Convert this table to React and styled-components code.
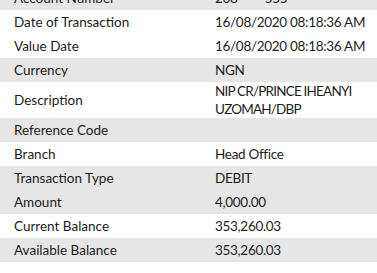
import React from "react";
import styled, { createGlobalStyle } from "styled-components";

const Global = createGlobalStyle`
  html, body { margin: 0; padding: 0; background: #ffffff; }
  body { font-family: Lato, "Open Sans", "Liberation Sans", sans-serif; }
`;

const Table = styled.div`
  display: flex;
  flex-direction: column;
  margin-top: -14px;
  width: 377px;
  overflow: hidden;
`;

const Row = styled.div`
  display: grid;
  grid-template-columns: 215px 1fr;
  align-items: center;
  min-height: 24px;
  background: ${(p) => (p.$shade ? "#e6e6e6" : "#ffffff")};
  color: #1c1c1c;
  font-size: 13.5px;
  line-height: 18px;
`;

const Label = styled.div`
  padding-left: 14px;
`;

const Value = styled.div`
  white-space: nowrap;
  letter-spacing: ${(p) => (p.$condensed ? "-0.8px" : "-0.3px")};
`;

const rows = [
  ["Account Number", "208*****555", true],
  ["Date of Transaction", "16/08/2020 08:18:36 AM", false],
  ["Value Date", "16/08/2020 08:18:36 AM", false],
  ["Currency", "NGN", true],
  ["Description", ["NIP CR/PRINCE IHEANYI", "UZOMAH/DBP"], false],
  ["Reference Code", "", true],
  ["Branch", "Head Office", false],
  ["Transaction Type", "DEBIT", true],
  ["Amount", "4,000.00", true],
  ["Current Balance", "353,260.03", false],
  ["Available Balance", "353,260.03", true],
];

export default function App() {
  return (
    <>
      <Global />
      <Table>
        {rows.map(([label, value, shade]) => (
          <Row key={label} $shade={shade}>
            <Label>{label}</Label>
            <Value $condensed={Array.isArray(value)}>
              {Array.isArray(value)
                ? value.map((line, i) => <div key={i}>{line}</div>)
                : value}
            </Value>
          </Row>
        ))}
      </Table>
    </>
  );
}
